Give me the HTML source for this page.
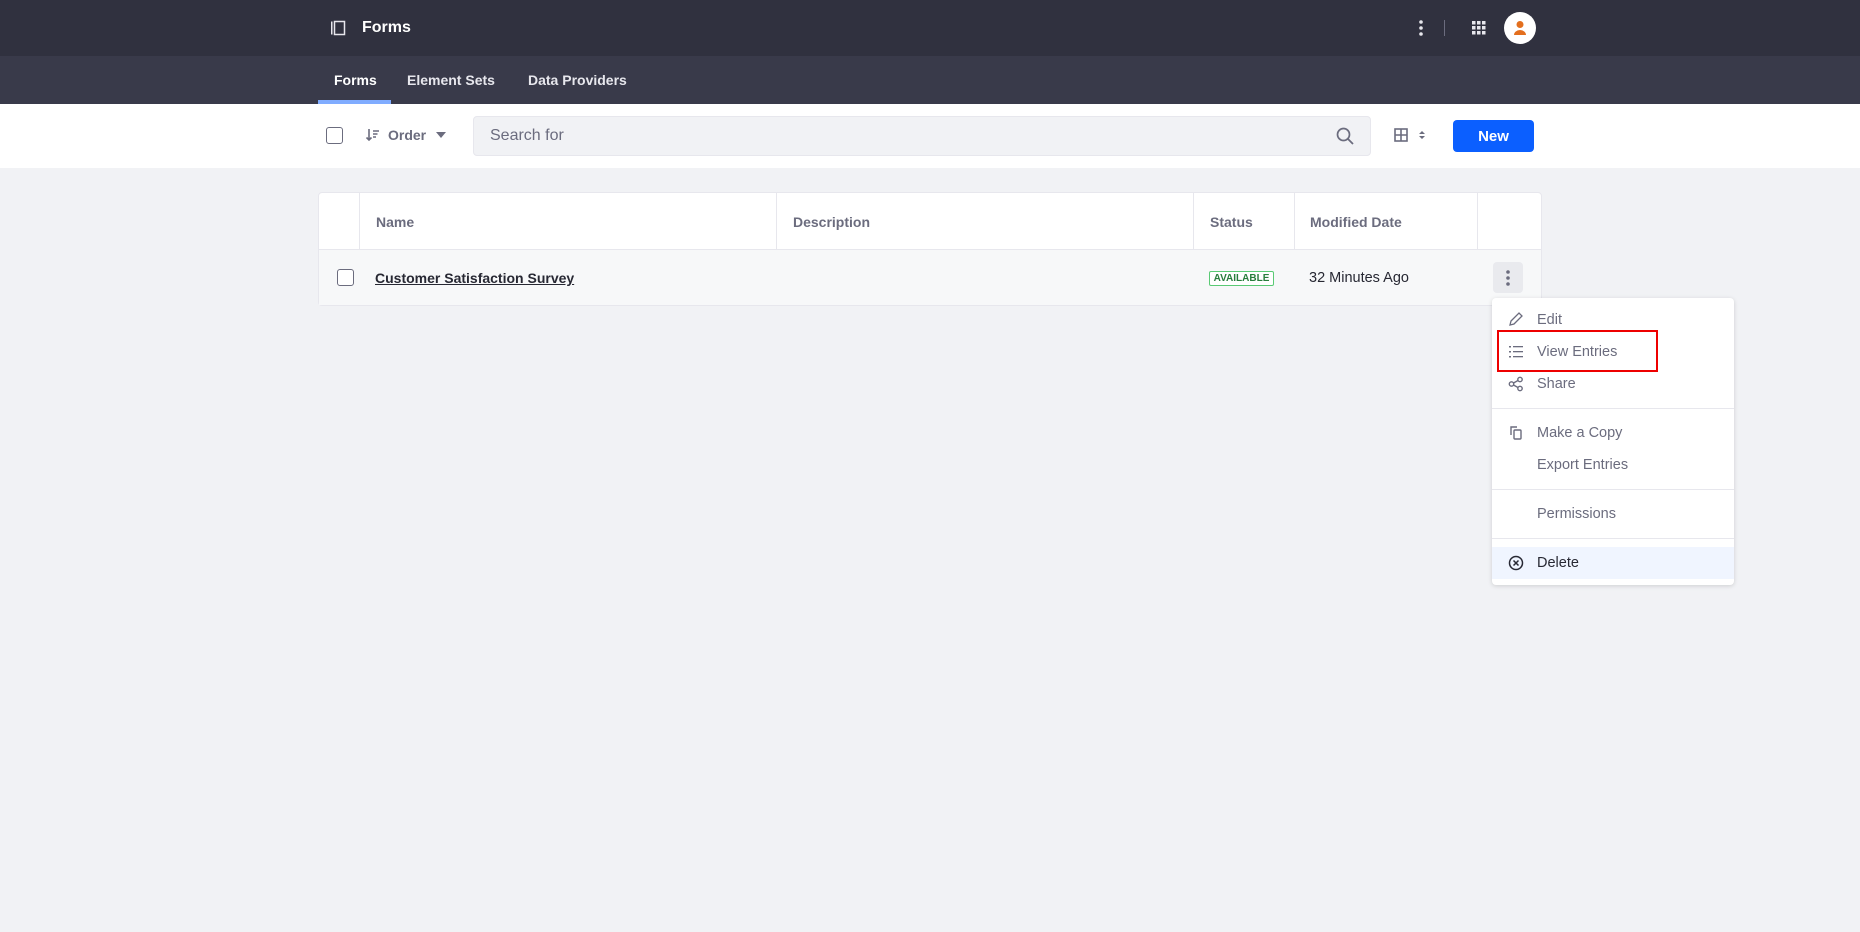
<!DOCTYPE html>
<html><head><meta charset="utf-8"><style>
*{box-sizing:border-box;margin:0;padding:0}
body{width:1860px;height:932px;background:#f1f2f5;font-family:"Liberation Sans",sans-serif;position:relative;overflow:hidden;color:#272833}
.abs{position:absolute}
.top{left:0;top:0;width:1860px;height:56px;background:#30313f}
.nav{left:0;top:56px;width:1860px;height:48px;background:#393a4a}
.tb{left:0;top:104px;width:1860px;height:64px;background:#fff}
.tab{top:72px;font-size:14px;font-weight:bold;color:#e7e7ed}
.cb{width:17px;height:17px;border:1.5px solid #6b6c7e;border-radius:3px;background:#fff}
.th{top:214px;font-size:14px;font-weight:bold;color:#6b6c7e}
.mi{left:1537px;font-size:14.5px;color:#6b6c7e}
.ic{left:1508px}
</style></head><body>
<div class="abs top"></div>
<div class="abs nav"></div>
<div class="abs tb"></div>
<svg class="abs" style="left:330px;top:20px" width="16" height="16" viewBox="0 0 16 16"><rect x="1" y="1.5" width="1.5" height="13" fill="#e7e7ed"/><rect x="4.5" y="1.5" width="10" height="13" fill="none" stroke="#e7e7ed" stroke-width="1.5"/></svg>
<div class="abs" style="left:362px;top:19px;font-size:16px;font-weight:bold;color:#fff">Forms</div>
<div class="abs tab" style="left:334px;color:#fff">Forms</div>
<div class="abs tab" style="left:407px">Element Sets</div>
<div class="abs tab" style="left:528px">Data Providers</div>
<div class="abs" style="left:318px;top:100px;width:73px;height:4px;background:#80acff"></div>
<svg class="abs" style="left:1418px;top:19px" width="6" height="18"><circle cx="3" cy="3" r="1.8" fill="#e7e7ed"/><circle cx="3" cy="9" r="1.8" fill="#e7e7ed"/><circle cx="3" cy="15" r="1.8" fill="#e7e7ed"/></svg>
<div class="abs" style="left:1444px;top:20px;width:1px;height:16px;background:#6b6c7e"></div>
<svg class="abs" style="left:1472px;top:21px" width="14" height="14"><g fill="#e7e7ed"><rect x="0" y="0" width="3.5" height="3.5"/><rect x="5" y="0" width="3.5" height="3.5"/><rect x="10" y="0" width="3.5" height="3.5"/><rect x="0" y="5" width="3.5" height="3.5"/><rect x="5" y="5" width="3.5" height="3.5"/><rect x="10" y="5" width="3.5" height="3.5"/><rect x="0" y="10" width="3.5" height="3.5"/><rect x="5" y="10" width="3.5" height="3.5"/><rect x="10" y="10" width="3.5" height="3.5"/></g></svg>
<svg class="abs" style="left:1504px;top:12px" width="32" height="32"><circle cx="16" cy="16" r="16" fill="#fff"/><circle cx="16" cy="12.5" r="3.5" fill="#e36f1e"/><path d="M10 23 a6 5 0 0 1 12 0 z" fill="#e36f1e"/></svg>
<div class="abs cb" style="left:326px;top:127px"></div>
<svg class="abs" style="left:365px;top:127px" width="16" height="16"><path d="M4 2v11M1.5 10.5L4 13l2.5-2.5" stroke="#6b6c7e" stroke-width="1.6" fill="none"/><path d="M8 4h6M8 7h4.5M8 10h3" stroke="#6b6c7e" stroke-width="1.5"/></svg>
<div class="abs" style="left:388px;top:127px;font-size:14px;font-weight:bold;color:#6b6c7e">Order</div>
<svg class="abs" style="left:436px;top:132px" width="10" height="6"><path d="M0 0h10L5 6z" fill="#6b6c7e"/></svg>
<div class="abs" style="left:473px;top:116px;width:898px;height:40px;background:#f1f2f5;border:1px solid #e7e7ed;border-radius:4px"></div>
<div class="abs" style="left:490px;top:127px;font-size:16px;color:#6b6c7e">Search for</div>
<svg class="abs" style="left:1336px;top:127px" width="18" height="18"><circle cx="7.5" cy="7.5" r="6" stroke="#6b6c7e" stroke-width="1.7" fill="none"/><path d="M12 12l5 5" stroke="#6b6c7e" stroke-width="1.8"/></svg>
<svg class="abs" style="left:1394px;top:128px" width="14" height="14"><rect x="1" y="1" width="12" height="12" fill="none" stroke="#6b6c7e" stroke-width="1.6"/><path d="M7 1v12M1 7h12" stroke="#6b6c7e" stroke-width="1.6"/></svg>
<svg class="abs" style="left:1419px;top:130px" width="6" height="10"><path d="M0 4l3-3 3 3zM0 6l3 3 3-3z" fill="#6b6c7e"/></svg>
<div class="abs" style="left:1453px;top:120px;width:81px;height:32px;background:#0b5fff;border-radius:4px;color:#fff;font-weight:bold;font-size:15px;text-align:center;line-height:33px">New</div>
<div class="abs" style="left:318px;top:192px;width:1224px;height:114px;background:#fff;border:1px solid #e7e7ed;border-radius:4px"></div>
<div class="abs" style="left:319px;top:249px;width:1222px;height:56px;background:#f7f8f9;border-top:1px solid #e7e7ed"></div>
<div class="abs" style="left:359px;top:193px;width:1px;height:56px;background:#e7e7ed"></div>
<div class="abs" style="left:776px;top:193px;width:1px;height:56px;background:#e7e7ed"></div>
<div class="abs" style="left:1193px;top:193px;width:1px;height:56px;background:#e7e7ed"></div>
<div class="abs" style="left:1294px;top:193px;width:1px;height:56px;background:#e7e7ed"></div>
<div class="abs" style="left:1477px;top:193px;width:1px;height:56px;background:#e7e7ed"></div>
<div class="abs th" style="left:376px">Name</div>
<div class="abs th" style="left:793px">Description</div>
<div class="abs th" style="left:1210px">Status</div>
<div class="abs th" style="left:1310px">Modified Date</div>
<div class="abs cb" style="left:337px;top:269px"></div>
<div class="abs" style="left:375px;top:270px;font-size:14px;font-weight:bold;color:#272833;text-decoration:underline">Customer Satisfaction Survey</div>
<div class="abs" style="left:1209px;top:271px;width:65px;height:15px;border:1px solid #5aca75;border-radius:2px;color:#287d3c;font-size:10px;font-weight:bold;text-align:center;line-height:13px;background:#fff">AVAILABLE</div>
<div class="abs" style="left:1309px;top:270px;font-size:14.5px;color:#272833">32 Minutes Ago</div>
<div class="abs" style="left:1493px;top:262px;width:30px;height:31px;background:#e9eaee;border-radius:4px"></div>
<svg class="abs" style="left:1505px;top:269px" width="6" height="18"><circle cx="3" cy="3" r="1.8" fill="#6b6c7e"/><circle cx="3" cy="9" r="1.8" fill="#6b6c7e"/><circle cx="3" cy="15" r="1.8" fill="#6b6c7e"/></svg>
<div class="abs" style="left:1492px;top:298px;width:242px;height:287px;background:#fff;border-radius:4px;box-shadow:0 1px 5px rgba(0,0,0,.15)"></div>
<div class="abs" style="left:1492px;top:408px;width:242px;height:1px;background:#e7e7ed"></div>
<div class="abs" style="left:1492px;top:489px;width:242px;height:1px;background:#e7e7ed"></div>
<div class="abs" style="left:1492px;top:538px;width:242px;height:1px;background:#e7e7ed"></div>
<div class="abs" style="left:1492px;top:547px;width:242px;height:32px;background:#f0f5ff"></div>
<svg class="abs ic" style="top:311px" width="16" height="16"><path d="M2 14l1-4 8-8 3 3-8 8z" fill="none" stroke="#6b6c7e" stroke-width="1.3"/></svg>
<div class="abs mi" style="top:312px">Edit</div>
<svg class="abs ic" style="top:344px" width="16" height="16"><g fill="#6b6c7e"><rect x="1" y="2" width="2" height="1.5"/><rect x="1" y="7" width="2" height="1.5"/><rect x="1" y="12" width="2" height="1.5"/><rect x="5" y="2" width="10" height="1.3"/><rect x="5" y="7" width="10" height="1.3"/><rect x="5" y="12" width="10" height="1.3"/></g></svg>
<div class="abs mi" style="top:344px">View Entries</div>
<svg class="abs ic" style="top:376px" width="16" height="16"><g fill="none" stroke="#6b6c7e" stroke-width="1.4"><circle cx="3.5" cy="8" r="2.2"/><circle cx="12" cy="3.5" r="2.2"/><circle cx="12" cy="12.5" r="2.2"/><path d="M5.5 7l4.5-2.5M5.5 9l4.5 2.5"/></g></svg>
<div class="abs mi" style="top:376px">Share</div>
<svg class="abs ic" style="top:425px" width="16" height="16"><g fill="none" stroke="#6b6c7e" stroke-width="1.4"><path d="M3 10V2h6"/><rect x="6" y="5" width="7" height="9" rx="1"/></g></svg>
<div class="abs mi" style="top:425px">Make a Copy</div>
<div class="abs mi" style="top:457px">Export Entries</div>
<div class="abs mi" style="top:506px">Permissions</div>
<svg class="abs ic" style="top:555px" width="16" height="16"><g fill="none" stroke="#272833" stroke-width="1.5"><circle cx="8" cy="8" r="6.5"/><path d="M5.5 5.5l5 5M10.5 5.5l-5 5"/></g></svg>
<div class="abs mi" style="top:555px;color:#272833">Delete</div>
<div class="abs" style="left:1497px;top:330px;width:161px;height:42px;border:2px solid #e00"></div>
</body></html>
